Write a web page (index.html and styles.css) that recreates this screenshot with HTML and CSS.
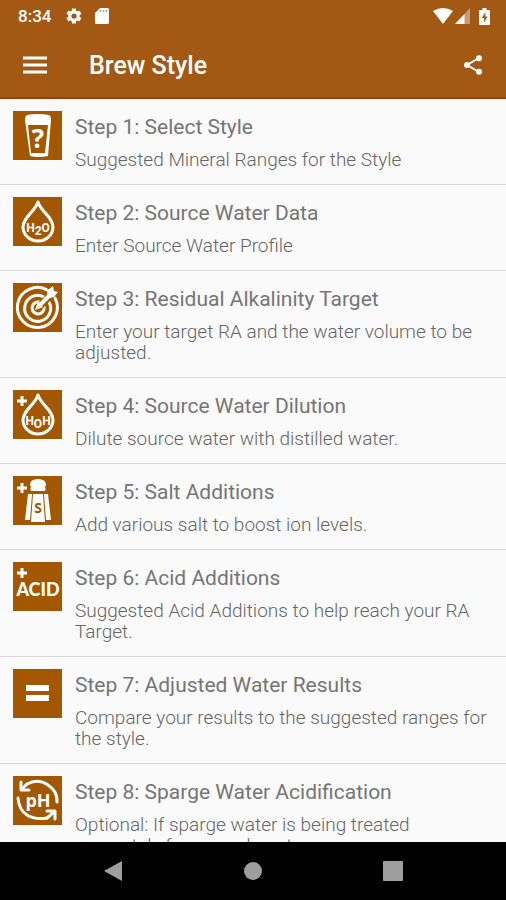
FILE: index.html
```
<!DOCTYPE html>
<html lang="en">
<head>
<meta charset="utf-8">
<meta name="viewport" content="width=device-width, initial-scale=1">
<title>Brew Style</title>
<link rel="stylesheet" href="styles.css">
</head>
<body>
<header class="top">
  <div class="status">
    <span class="clock">8:34</span>
    <svg class="status-icon" width="18" height="18" viewBox="0 0 24 24" aria-hidden="true"><path fill="currentColor" fill-rule="evenodd" d="M19.4 13a8 8 0 0 0 0-2l2.200-1.600c.2-.2.2-.4.1-.7l-2-3.500c-.1-.2-.4-.3-.6-.2l-2.600 1a8 8 0 0 0-1.700-1l-.4-2.600a.5.5 0 0 0-.5-.4h-4a.5.5 0 0 0-.5.4L9 5a8 8 0 0 0-1.700 1l-2.500-1c-.2-.1-.5 0-.6.2l-2 3.500c-.1.2-.1.500.1.600L4.500 11a8 8 0 0 0 0 2l-2.200 1.600c-.2.2-.2.400-.1.700l2 3.500c.1.2.4.300.6.2l2.500-1a8 8 0 0 0 1.700 1l.4 2.600c0 .2.2.4.500.4h4c.3 0 .500-.2.500-.4l.4-2.600a8 8 0 0 0 1.700-1l2.500 1c.2.1.500 0 .6-.2l2-3.500c.1-.2.1-.500-.1-.6zM12 15.500a3.500 3.500 0 1 1 0-7 3.500 3.500 0 0 1 0 7z"/></svg>
    <svg class="status-icon card" width="14" height="16" viewBox="0 0 14 16" aria-hidden="true"><path fill="currentColor" d="M5 0h7.500A1.500 1.500 0 0 1 14 1.500v13a1.500 1.500 0 0 1-1.500 1.500h-11A1.500 1.500 0 0 1 0 14.500V5z"/><path stroke="#c79a72" stroke-width="1.500" d="M5.500 2v2M8.500 2v2M11.500 2v2"/></svg>
    <span class="spacer"></span>
    <svg width="20" height="16" viewBox="0 0 20 16" aria-hidden="true"><path fill="currentColor" d="M0 3Q10-3 20 3L10 16z"/></svg>
    <svg width="16" height="16" viewBox="0 0 16 16" aria-hidden="true"><path fill="#c79a72" d="M15 0v16H0z"/><path fill="currentColor" d="M9.500 6v10H0z"/></svg>
    <svg class="battery" width="11" height="17" viewBox="0 0 11 17" aria-hidden="true"><path fill="currentColor" d="M3.500 0h4v2H10q1 0 1 1v13q0 1-1 1H1q-1 0-1-1V3q0-1 1-1h2.500z"/><path fill="#a35914" d="M6.500 4 2.800 10h2.300v4.500L8.500 8.500H6.300z"/></svg>
  </div>
  <div class="toolbar">
    <button class="icon-button" type="button" aria-label="Menu"><svg width="24" height="18" viewBox="0 0 24 18"><path stroke="currentColor" stroke-width="3" d="M0 2h24M0 9h24M0 16h24"/></svg></button>
    <h1 class="heading">Brew Style</h1>
    <button class="icon-button" type="button" aria-label="Share"><svg width="18" height="20" viewBox="0 0 18 20"><path stroke="currentColor" stroke-width="2" fill="none" d="M15 3 3 10l12 7"/><g fill="currentColor"><circle cx="15" cy="3.200" r="3"/><circle cx="3" cy="10" r="3"/><circle cx="15" cy="16.800" r="3"/></g></svg></button>
  </div>
</header>
<main class="steps">
  <a class="step" href="#style">
    <svg class="tile" viewBox="0 0 49 49" aria-hidden="true"><path fill="#fff" d="M14 4q10-2 22 0 2 1 2 5l-3 36q-10 2-18 0L12 9q0-4 2-5z"/><path fill="#a35700" d="M15 14h20l-3 28H18z"/><text class="glyph" x="25" y="37" font-size="26">?</text></svg>
    <div class="copy"><h2 class="title">Step 1: Select Style</h2><p class="detail">Suggested Mineral Ranges for the Style</p></div>
  </a>
  <a class="step" href="#source">
    <svg class="tile" viewBox="0 0 49 49" aria-hidden="true"><path class="line" d="M25 5C22 15 10 20 10 30a15 14 0 0 0 30 0C40 20 28 15 25 5z"/><text class="glyph formula" x="25" y="35">H<tspan dy="3">2</tspan><tspan dy="-3">O</tspan></text></svg>
    <div class="copy"><h2 class="title">Step 2: Source Water Data</h2><p class="detail">Enter Source Water Profile</p></div>
  </a>
  <a class="step" href="#target">
    <svg class="tile" viewBox="0 0 49 49" aria-hidden="true"><g class="line"><path d="M35 7.500A20 20 0 1 0 42 15"/><path d="M31 14A13 13 0 1 0 36 19"/><path d="M26 19a6 6 0 1 0 5 5"/></g><path stroke="#a35700" stroke-width="7" d="M25 25 38 12"/><path stroke="#fff" stroke-width="4" d="M25 24 40 9"/><path fill="#fff" d="m34 12 1-5 5-4 1 5 4 1-4 5-5 1zM22 27l3-8 5 5z"/></svg>
    <div class="copy"><h2 class="title">Step 3: Residual Alkalinity Target</h2><p class="detail">Enter your target RA and the water volume to be adjusted.</p></div>
  </a>
  <a class="step" href="#dilution">
    <svg class="tile" viewBox="0 0 49 49" aria-hidden="true"><path class="line thin" d="M4 11h10M9 6v10"/><path class="line" d="M25 5C22 15 10 20 10 30a15 14 0 0 0 30 0C40 20 28 15 25 5z"/><text class="glyph formula" x="25" y="35">H<tspan dy="3">O</tspan><tspan dy="-3">H</tspan></text></svg>
    <div class="copy"><h2 class="title">Step 4: Source Water Dilution</h2><p class="detail">Dilute source water with distilled water.</p></div>
  </a>
  <a class="step" href="#salt">
    <svg class="tile" viewBox="0 0 49 49" aria-hidden="true"><path class="line thin" d="M4 12h10M9 7v10"/><path fill="#fff" d="M17 9q0-6 8-6t8 6l-1 2q1 2 0 4H18q-1-2 0-4zM15 18h4l-2 26h-5zM20 18h10l2 28H18zM31 18h4l3 26h-5z"/><text class="glyph dark" x="25" y="37" font-size="14">S</text></svg>
    <div class="copy"><h2 class="title">Step 5: Salt Additions</h2><p class="detail">Add various salt to boost ion levels.</p></div>
  </a>
  <a class="step" href="#acid">
    <svg class="tile" viewBox="0 0 49 49" aria-hidden="true"><path class="line thin" d="M4 11h10M9 6v10"/><text class="glyph word" x="25" y="34" font-size="18">ACID</text></svg>
    <div class="copy"><h2 class="title">Step 6: Acid Additions</h2><p class="detail">Suggested Acid Additions to help reach your RA Target.</p></div>
  </a>
  <a class="step" href="#results">
    <svg class="tile" viewBox="0 0 49 49" aria-hidden="true"><path fill="#fff" d="M13 16h23v6H13zM13 26h23v6H13z"/></svg>
    <div class="copy"><h2 class="title">Step 7: Adjusted Water Results</h2><p class="detail">Compare your results to the suggested ranges for the style.</p></div>
  </a>
  <a class="step" href="#sparge">
    <svg class="tile" viewBox="0 0 49 49" aria-hidden="true"><g class="line"><path d="M14 8Q25 2 35 9T44 26M8 6v8h8M5 22q1 12 9 17t20 3M34 35h8v8"/><path d="m9 13 5-5M41 36l-7 6"/></g><text class="glyph" x="25" y="31" font-size="18">pH</text></svg>
    <div class="copy"><h2 class="title">Step 8: Sparge Water Acidification</h2><p class="detail">Optional: If sparge water is being treated separately from mash water.</p></div>
  </a>
</main>
<nav class="system" aria-label="System navigation">
  <button class="nav-button" type="button" aria-label="Back"><svg width="20" height="22" viewBox="0 0 20 22"><path fill="currentColor" d="M19 1v20L1 11z"/></svg></button>
  <button class="nav-button" type="button" aria-label="Home"><svg width="20" height="20" viewBox="0 0 20 20"><circle cx="10" cy="10" r="9" fill="currentColor"/></svg></button>
  <button class="nav-button" type="button" aria-label="Recent apps"><svg width="20" height="20" viewBox="0 0 20 20"><rect width="20" height="20" rx="1" fill="currentColor"/></svg></button>
</nav>
</body>
</html>
```
FILE: styles.css
```
* { box-sizing: border-box; }
body {
  margin: 0;
  height: 100vh;
  display: flex;
  flex-direction: column;
  overflow: hidden;
  background: #fafafa;
  font-family: Roboto, "Liberation Sans", sans-serif;
}
button { border: 0; padding: 0; background: none; color: inherit; }
svg { display: block; flex: none; }
h1, h2, p { margin: 0; }

.top {
  flex: none;
  background: #a35914;
  border-bottom: 2px solid #93400f;
  color: #fff;
}
.status {
  display: flex;
  align-items: center;
  height: 32px;
  padding: 0 16px 0 18px;
}
.clock { font-size: 17px; font-weight: 500; line-height: 32px; margin-right: 14px; }
.card { margin-left: 12px; }
.spacer { flex: 1; }
.status svg + svg:not(.status-icon) { margin-left: 2px; }
.status .battery.battery { margin-left: 8px; }

.toolbar {
  display: flex;
  align-items: center;
  height: 65px;
  padding: 0 24px 0 23px;
}
.icon-button { flex: none; }
.heading {
  flex: 1;
  margin-left: 42px;
  font-size: 25px;
  font-weight: 500;
  line-height: 32px;
  padding-top: 2px;
}

.steps { flex: 1; min-height: 0; overflow: hidden; }
.step {
  display: flex;
  gap: 13px;
  padding: 12px 13px 14px;
  border-bottom: 1px solid #d9d9d9;
  color: #656565;
  text-decoration: none;
}
.tile { width: 49px; height: 49px; background: #a35700; }
.copy { flex: 1; min-width: 0; }
.title { color: #757575; font-size: 21px; font-weight: 400; line-height: 32px; }
.detail { margin-top: 6px; font-size: 19px; font-weight: 300; line-height: 21px; }

.line {
  fill: none;
  stroke: #fff;
  stroke-width: 3;
  stroke-linecap: round;
  stroke-linejoin: round;
}
.thin { stroke-linecap: butt; }
.glyph {
  fill: #fff;
  font-family: "Open Sans", sans-serif;
  font-weight: 700;
  text-anchor: middle;
}
.formula { font-family: Roboto, sans-serif; font-size: 12px; }
.word { font-family: Lato, sans-serif; font-weight: 900; }
.dark { fill: #a35700; }

.system {
  flex: none;
  display: flex;
  justify-content: space-around;
  align-items: center;
  height: 58px;
  padding: 0 43px;
  background: #000;
  color: #9e9e9e;
}
.nav-button { flex: 1; display: flex; justify-content: center; }
```
